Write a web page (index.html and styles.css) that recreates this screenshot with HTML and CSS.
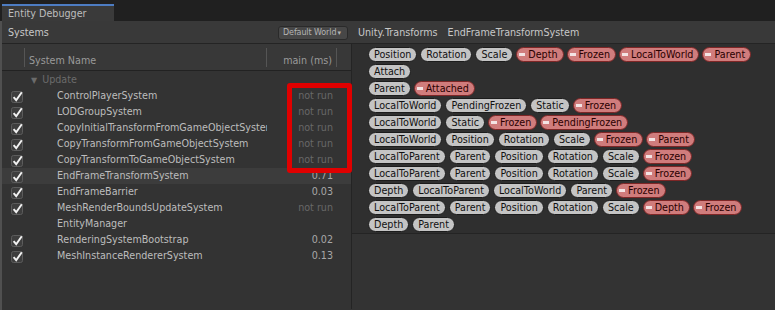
FILE: index.html
```html
<!DOCTYPE html>
<html>
<head>
<meta charset="utf-8">
<link rel="stylesheet" href="styles.css">
</head>
<body>
<div class="tabbar"><div class="tab">Entity Debugger</div></div>
<div class="window">
  <div class="toolbar">
    <div class="tb-left">
      <span class="title">Systems</span>
      <span class="world-btn">Default World<span class="caret">▾</span></span>
    </div>
    <div class="tb-right">
      <span class="ns">Unity.Transforms</span>
      <span class="sys">EndFrameTransformSystem</span>
    </div>
  </div>
  <div class="main">
    <div class="systems">
      <div class="colhead">
        <div class="hc hc-check"></div>
        <div class="hc hc-name">System Name</div>
        <div class="hc hc-time">main (ms)</div>
      </div>
      <div class="list">
        <div class="row group"><span class="cell"></span><span class="cell name"><span class="tri">▼</span>Update</span><span class="cell time"></span></div>
        <div class="row"><span class="cell chk"><svg class="cb" viewBox="0 0 13 13"><rect x="0.5" y="1.5" width="11" height="11" rx="2" fill="#3e3e3e" stroke="#5c5c5c"/><path d="M2.6 7.2 L5.2 10.2 L10.8 2.2" stroke="#f2f2f2" stroke-width="2" fill="none"/></svg></span><span class="cell name">ControlPlayerSystem</span><span class="cell time dim">not run</span></div>
        <div class="row"><span class="cell chk"><svg class="cb" viewBox="0 0 13 13"><rect x="0.5" y="1.5" width="11" height="11" rx="2" fill="#3e3e3e" stroke="#5c5c5c"/><path d="M2.6 7.2 L5.2 10.2 L10.8 2.2" stroke="#f2f2f2" stroke-width="2" fill="none"/></svg></span><span class="cell name">LODGroupSystem</span><span class="cell time dim">not run</span></div>
        <div class="row"><span class="cell chk"><svg class="cb" viewBox="0 0 13 13"><rect x="0.5" y="1.5" width="11" height="11" rx="2" fill="#3e3e3e" stroke="#5c5c5c"/><path d="M2.6 7.2 L5.2 10.2 L10.8 2.2" stroke="#f2f2f2" stroke-width="2" fill="none"/></svg></span><span class="cell name">CopyInitialTransformFromGameObjectSystem</span><span class="cell time dim">not run</span></div>
        <div class="row"><span class="cell chk"><svg class="cb" viewBox="0 0 13 13"><rect x="0.5" y="1.5" width="11" height="11" rx="2" fill="#3e3e3e" stroke="#5c5c5c"/><path d="M2.6 7.2 L5.2 10.2 L10.8 2.2" stroke="#f2f2f2" stroke-width="2" fill="none"/></svg></span><span class="cell name">CopyTransformFromGameObjectSystem</span><span class="cell time dim">not run</span></div>
        <div class="row"><span class="cell chk"><svg class="cb" viewBox="0 0 13 13"><rect x="0.5" y="1.5" width="11" height="11" rx="2" fill="#3e3e3e" stroke="#5c5c5c"/><path d="M2.6 7.2 L5.2 10.2 L10.8 2.2" stroke="#f2f2f2" stroke-width="2" fill="none"/></svg></span><span class="cell name">CopyTransformToGameObjectSystem</span><span class="cell time dim">not run</span></div>
        <div class="row selected"><span class="cell chk"><svg class="cb" viewBox="0 0 13 13"><rect x="0.5" y="1.5" width="11" height="11" rx="2" fill="#3e3e3e" stroke="#5c5c5c"/><path d="M2.6 7.2 L5.2 10.2 L10.8 2.2" stroke="#f2f2f2" stroke-width="2" fill="none"/></svg></span><span class="cell name">EndFrameTransformSystem</span><span class="cell time">0.71</span></div>
        <div class="row"><span class="cell chk"><svg class="cb" viewBox="0 0 13 13"><rect x="0.5" y="1.5" width="11" height="11" rx="2" fill="#3e3e3e" stroke="#5c5c5c"/><path d="M2.6 7.2 L5.2 10.2 L10.8 2.2" stroke="#f2f2f2" stroke-width="2" fill="none"/></svg></span><span class="cell name">EndFrameBarrier</span><span class="cell time">0.03</span></div>
        <div class="row"><span class="cell chk"><svg class="cb" viewBox="0 0 13 13"><rect x="0.5" y="1.5" width="11" height="11" rx="2" fill="#3e3e3e" stroke="#5c5c5c"/><path d="M2.6 7.2 L5.2 10.2 L10.8 2.2" stroke="#f2f2f2" stroke-width="2" fill="none"/></svg></span><span class="cell name">MeshRenderBoundsUpdateSystem</span><span class="cell time dim">not run</span></div>
        <div class="row"><span class="cell"></span><span class="cell name">EntityManager</span><span class="cell time"></span></div>
        <div class="row"><span class="cell chk"><svg class="cb" viewBox="0 0 13 13"><rect x="0.5" y="1.5" width="11" height="11" rx="2" fill="#3e3e3e" stroke="#5c5c5c"/><path d="M2.6 7.2 L5.2 10.2 L10.8 2.2" stroke="#f2f2f2" stroke-width="2" fill="none"/></svg></span><span class="cell name">RenderingSystemBootstrap</span><span class="cell time">0.02</span></div>
        <div class="row"><span class="cell chk"><svg class="cb" viewBox="0 0 13 13"><rect x="0.5" y="1.5" width="11" height="11" rx="2" fill="#3e3e3e" stroke="#5c5c5c"/><path d="M2.6 7.2 L5.2 10.2 L10.8 2.2" stroke="#f2f2f2" stroke-width="2" fill="none"/></svg></span><span class="cell name">MeshInstanceRendererSystem</span><span class="cell time">0.13</span></div>
      </div>
    </div>
    <div class="queries">
      <div class="qlist">
        <div class="qrow"><span class="pill">Position</span><span class="pill">Rotation</span><span class="pill">Scale</span><span class="pill sub"><i></i>Depth</span><span class="pill sub"><i></i>Frozen</span><span class="pill sub"><i></i>LocalToWorld</span><span class="pill sub"><i></i>Parent</span><span class="pill">Attach</span></div>
        <div class="qrow"><span class="pill">Parent</span><span class="pill sub"><i></i>Attached</span></div>
        <div class="qrow"><span class="pill">LocalToWorld</span><span class="pill">PendingFrozen</span><span class="pill">Static</span><span class="pill sub"><i></i>Frozen</span></div>
        <div class="qrow"><span class="pill">LocalToWorld</span><span class="pill">Static</span><span class="pill sub"><i></i>Frozen</span><span class="pill sub"><i></i>PendingFrozen</span></div>
        <div class="qrow"><span class="pill">LocalToWorld</span><span class="pill">Position</span><span class="pill">Rotation</span><span class="pill">Scale</span><span class="pill sub"><i></i>Frozen</span><span class="pill sub"><i></i>Parent</span></div>
        <div class="qrow"><span class="pill">LocalToParent</span><span class="pill">Parent</span><span class="pill">Position</span><span class="pill">Rotation</span><span class="pill">Scale</span><span class="pill sub"><i></i>Frozen</span></div>
        <div class="qrow"><span class="pill">LocalToParent</span><span class="pill">Parent</span><span class="pill">Position</span><span class="pill">Rotation</span><span class="pill">Scale</span><span class="pill sub"><i></i>Frozen</span></div>
        <div class="qrow"><span class="pill">Depth</span><span class="pill">LocalToParent</span><span class="pill">LocalToWorld</span><span class="pill">Parent</span><span class="pill sub"><i></i>Frozen</span></div>
        <div class="qrow"><span class="pill">LocalToParent</span><span class="pill">Parent</span><span class="pill">Position</span><span class="pill">Rotation</span><span class="pill">Scale</span><span class="pill sub"><i></i>Depth</span><span class="pill sub"><i></i>Frozen</span></div>
        <div class="qrow"><span class="pill">Depth</span><span class="pill">Parent</span></div>
      </div>
    </div>
  </div>
  <div class="annot"></div>
</div>
</body>
</html>
```

FILE: styles.css
```css
* { box-sizing: border-box; }
html, body { margin: 0; padding: 0; }
body {
  width: 775px;
  height: 310px;
  overflow: hidden;
  background: #202020;
  font-family: "DejaVu Sans", sans-serif;
  font-size: 9.6px;
  color: #c2c2c2;
}
.tabbar {
  height: 21px;
  padding: 4px 0 0 2px;
  display: flex;
  align-items: stretch;
}
.tab {
  width: 112px;
  background: #3a3a3a;
  border-top: 2px solid #4d7cc2;
  padding-left: 6px;
  line-height: 15px;
  color: #bdbdbd;
}
.window {
  position: relative;
  height: 289px;
  background: #333333;
  border-left: 2px solid #505050;
}
.toolbar {
  height: 23px;
  display: flex;
  background: #393939;
  border-bottom: 1px solid #242424;
}
.tb-left {
  width: 350px;
  display: flex;
  align-items: center;
  justify-content: space-between;
  padding: 0 4px 0 6px;
}
.title { color: #c8c8c8; }
.world-btn {
  height: 14px;
  width: 70px;
  margin-top: 1px;
  background: #474747;
  border: 1px solid #2a2a2a;
  border-radius: 3px;
  font-size: 8px;
  color: #b4b4b4;
  line-height: 12px;
  padding-left: 4px;
  display: flex;
  letter-spacing: -0.1px;
}
.caret { font-size: 7px; margin-left: 1px; }
.tb-right {
  display: flex;
  align-items: center;
  padding-left: 6px;
  gap: 10px;
}
.ns, .sys { color: #c8c8c8; }
.main {
  display: flex;
  height: 265px;
}
.systems {
  width: 350px;
  border-right: 1px solid #242424;
  display: flex;
  flex-direction: column;
}
.colhead {
  height: 27px;
  display: grid;
  grid-template-columns: 23px 242px 70px;
  background: #383838;
  border-bottom: 1px solid #222;
  padding-top: 4px;
  padding-bottom: 3px;
}
.hc {
  border-right: 1px solid #555;
  color: #9a9a9a;
  display: flex;
  align-items: flex-end;
  line-height: 12px;
}
.hc-name { padding-left: 4px; }
.hc-time { justify-content: flex-end; padding-right: 4px; }
.list { flex: 1; background: #333; padding-top: 1px; }
.row {
  height: 16px;
  display: grid;
  grid-template-columns: 23px 242px 70px;
  align-items: center;
}
.row.selected { background: #3c3c3c; }
.cell { white-space: nowrap; overflow: hidden; line-height: 16px; }
.chk { display: flex; align-items: center; padding-left: 9px; }
.cb { width: 13px; height: 13px; display: block; }
.name { padding-left: 32px; color: #bdbdbd; }
.group .name { padding-left: 6px; color: #6b6b6b; }
.tri { font-size: 8px; margin-right: 5px; color: #6b6b6b; }
.time { text-align: right; padding-right: 4px; color: #a8a8a8; }
.time.dim { color: #686868; }
.queries {
  flex: 1;
  display: flex;
  flex-direction: column;
}
.qlist {
  padding: 2px 4px 0 16px;
  background: #2f2f2f;
  border-bottom: 1px solid #242424;
}
.qrow {
  display: flex;
  flex-wrap: wrap;
  gap: 2px 3px;
  padding: 1px 0;
}
.pill {
  height: 15px;
  display: inline-flex;
  align-items: center;
  padding: 0 5px;
  background: #c4c4c4;
  border: 1px solid #1c1c1c;
  border-radius: 8px;
  color: #111;
  line-height: 13px;
}
.pill.sub {
  background: #d07c7c;
  border-color: #7e2626;
  color: #2a0000;
  padding: 0 5px 0 2px;
}
.pill.sub i {
  width: 6px;
  height: 3px;
  background: #f4e4e4;
  margin-right: 3px;
}
.annot {
  position: absolute;
  left: 285px;
  top: 62px;
  width: 65px;
  height: 90px;
  border: 5px solid #e00000;
  border-radius: 3px;
}
```
